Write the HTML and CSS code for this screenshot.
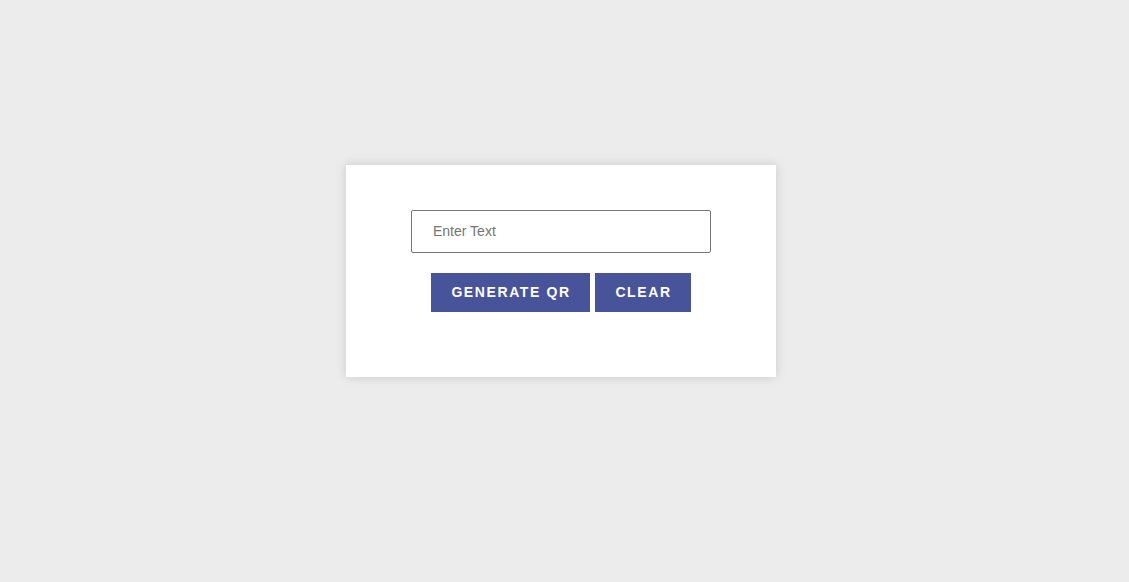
FILE: index.html
```html
<!DOCTYPE html>
<html>
<head>
<meta charset="utf-8">
<link rel="stylesheet" href="styles.css">
</head>
<body>
<div class="card">
  <input class="text-input" type="text" placeholder="Enter Text">
  <div class="actions">
    <button class="btn btn-generate">GENERATE QR</button>
    <button class="btn btn-clear">CLEAR</button>
  </div>
</div>
</body>
</html>
```
FILE: styles.css
```css
html, body {
  margin: 0;
  padding: 0;
  background: #ececec;
  font-family: "Liberation Sans", Arial, sans-serif;
}
body {
  padding-top: 165px;
  height: 582px;
  box-sizing: border-box;
}
.card {
  margin-left: 346px;
  width: 430px;
  height: 212px;
  box-sizing: border-box;
  background: #fff;
  box-shadow: 0 0 10px rgba(0, 0, 0, 0.15);
  padding-top: 45px;
  display: flex;
  flex-direction: column;
  align-items: center;
}
.text-input {
  width: 300px;
  height: 43px;
  box-sizing: border-box;
  border: 1px solid #777;
  border-radius: 2px;
  padding: 0 21px 2px;
  font-family: "Liberation Sans", Arial, sans-serif;
  font-size: 14px;
  color: #333;
  outline: none;
}
.text-input::placeholder {
  color: #757575;
}
.actions {
  display: flex;
  gap: 5px;
  margin-top: 20px;
}
.btn {
  height: 39px;
  border: none;
  background: #47549a;
  color: #fff;
  font-family: "Liberation Sans", Arial, sans-serif;
  font-weight: bold;
  font-size: 14px;
  letter-spacing: 1.6px;
  padding: 0 0 2px 1px;
  cursor: pointer;
}
.btn-generate {
  width: 159px;
}
.btn-clear {
  width: 96px;
}
```
